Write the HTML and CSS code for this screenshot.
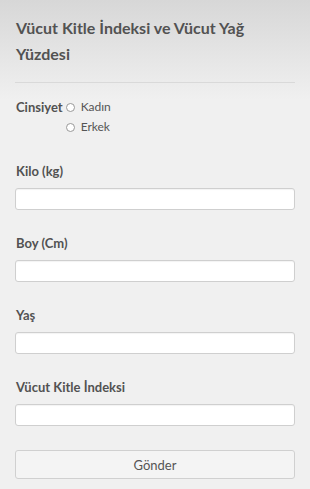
FILE: index.html
```html
<!DOCTYPE html>
<html lang="tr">
<head>
  <meta charset="UTF-8">
  <meta name="viewport" content="width=device-width, initial-scale=1.0">
  <title>Vücut Kitle İndeksi</title>
  <link rel="stylesheet" href="styles.css">
</head>
<body>

  <!-- Header -->
  <div class="header">
    <h1 class="title">Vücut Kitle İndeksi ve Vücut Yağ Yüzdesi</h1>
    <div class="divider"></div>
  </div>

  <!-- Form -->
  <form class="bmi-form">
    <div class="gender-row">
      <span class="field-label">Cinsiyet</span>
      <div class="radio-list">
        <label class="radio-option"><input type="radio" name="cinsiyet" value="kadin"> Kadın</label>
        <label class="radio-option"><input type="radio" name="cinsiyet" value="erkek"> Erkek</label>
      </div>
    </div>

    <div class="field">
      <label class="field-label" for="kilo">Kilo (kg)</label>
      <input class="text-input" type="text" id="kilo">
    </div>

    <div class="field">
      <label class="field-label" for="boy">Boy (Cm)</label>
      <input class="text-input" type="text" id="boy">
    </div>

    <div class="field">
      <label class="field-label" for="yas">Yaş</label>
      <input class="text-input" type="text" id="yas">
    </div>

    <div class="field">
      <label class="field-label" for="vki">Vücut Kitle İndeksi</label>
      <input class="text-input" type="text" id="vki">
    </div>

    <button class="submit-button" type="button">Gönder</button>
  </form>

</body>
</html>
```

FILE: styles.css
```css
body {
  margin: 0;
  padding: 0 15px;
  font-family: 'Lato', 'Open Sans', sans-serif;
  color: #555;
  background: #f0f0f0 linear-gradient(to bottom, #d7d7d7 0, #f0f0f0 100px) no-repeat;
}

/* Header */
.header {
  padding-top: 15px;
}

.title {
  margin: 0 0 0 1px;
  font-size: 16px;
  line-height: 26px;
  font-weight: bold;
  color: #525252;
}

.divider {
  margin-top: 15px;
  height: 1px;
  background-color: #d9d9d9;
}

/* Form */
.bmi-form {
  padding-top: 14px;
}

.gender-row {
  display: flex;
  align-items: flex-start;
  margin-bottom: 25px;
}

.gender-row .field-label {
  line-height: 20px;
  margin-right: 3px;
}

.radio-list {
  display: flex;
  flex-direction: column;
}

.radio-option {
  display: flex;
  align-items: center;
  font-size: 12px;
  line-height: 20px;
}

.radio-option input {
  appearance: none;
  -webkit-appearance: none;
  width: 9px;
  height: 9px;
  margin: 1px 6px 0 0;
  border: 1px solid #999;
  border-radius: 50%;
  background-color: #fff;
}

.field-label {
  display: block;
  margin-left: 1px;
  font-size: 13px;
  line-height: 18px;
  font-weight: bold;
  color: #525252;
}

.field {
  margin-bottom: 24px;
}

.field .field-label {
  margin-bottom: 8px;
}

.text-input {
  display: block;
  box-sizing: border-box;
  width: 100%;
  height: 22px;
  padding: 2px 6px;
  border: 1px solid #cfcfcf;
  border-radius: 3px;
  background-color: #fff;
  box-shadow: inset 0 1px 1px rgba(0, 0, 0, 0.05);
  font-family: inherit;
}

.submit-button {
  display: block;
  box-sizing: border-box;
  width: 100%;
  height: 29px;
  border: 1px solid #d0d0d0;
  border-radius: 3px;
  background-color: #f4f4f4;
  color: #555;
  font-family: inherit;
  font-size: 13px;
  cursor: pointer;
}
```
